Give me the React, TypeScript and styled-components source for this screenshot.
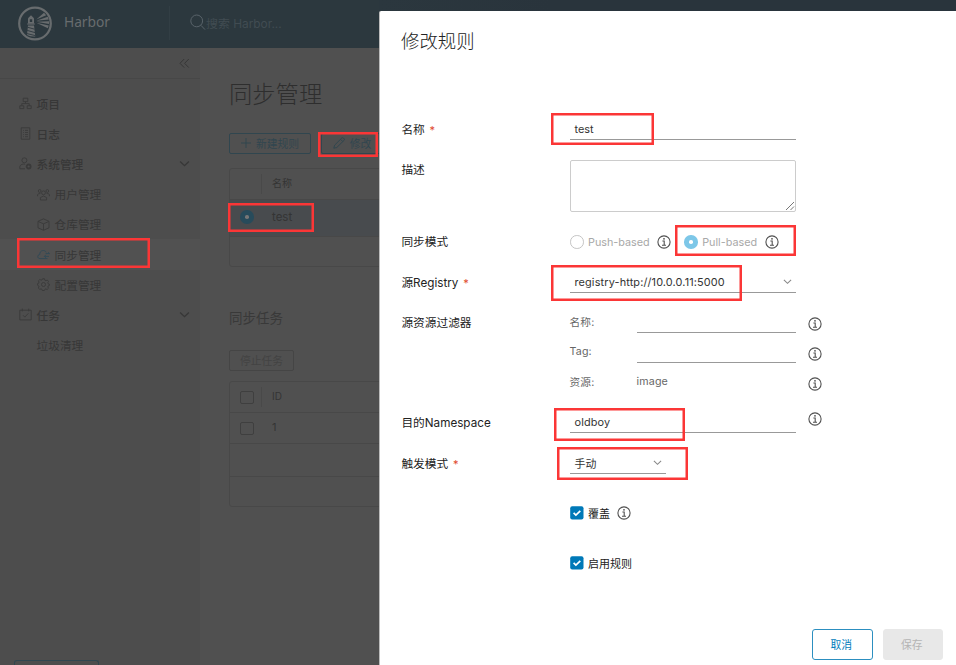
import React from "react";
import styled, { createGlobalStyle, css } from "styled-components";

const Global = createGlobalStyle`
  * { box-sizing: border-box; }
  html, body { margin: 0; padding: 0; overflow: hidden; background: #505050; }
  body { font-family: Inter, "Noto Sans CJK SC", sans-serif; font-size: 11.7px; }
`;

const Screen = styled.div`
  position: relative;
  width: 956px;
  height: 665px;
  overflow: hidden;
  background: #505050;
`;

/* ---------- application behind the dialog ---------- */
const Header = styled.header`
  display: flex;
  align-items: center;
  height: 48px;
  padding-left: 17px;
  padding-bottom: 2px;
  background: #2c383e;
  color: #686c6e;
`;
const Brand = styled.div`
  display: flex;
  align-items: center;
  gap: 12px;
  width: 153px;
  height: 34px;
  border-right: 1px solid #323e44;
  font-family: "Noto Sans", sans-serif;
  font-size: 13.8px;
`;
const BrandName = styled.span`
  padding-bottom: 3px;
  letter-spacing: -0.05px;
`;
const Search = styled.div`
  display: flex;
  align-items: center;
  gap: 0;
  margin-left: 20px;
  color: #414c52;
  font-size: 11.9px;
  span { padding-bottom: 1px; }
  svg { color: #59636a; margin-top: -2px; }
`;
const Body = styled.div`
  display: flex;
  height: 617px;
`;
const Sidebar = styled.nav`
  display: flex;
  flex-direction: column;
  width: 200px;
  background: #4d4d4d;
  color: #373737;
`;
const Collapse = styled.div`
  display: flex;
  justify-content: flex-end;
  align-items: center;
  height: 31px;
  padding-right: 10px;
  margin-bottom: 9.5px;
  border-bottom: 1px solid #474747;
  color: #363636;
`;
const NavItem = styled.div<{ $level?: number; $active?: boolean; $bold?: boolean }>`
  display: flex;
  align-items: center;
  gap: 5px;
  height: 30.2px;
  padding: 0 10px 0 ${(p) => (p.$level ? 36.5 : 18.5)}px;
  font-weight: ${(p) => (p.$bold ? 500 : 400)};
  ${(p) => p.$active && css`background: #515151;`}
  svg { flex: none; }
`;
const NavText = styled.span`
  flex: 1;
  padding-bottom: 1px;
`;
const SideFoot = styled.div`
  width: 85px;
  height: 5px;
  margin: auto 0 0 14px;
  border: 1px solid #304650;
  border-bottom: 0;
  border-radius: 3px 3px 0 0;
`;
const Content = styled.main`
  flex: 1;
  padding: 30px 0 0 29px;
`;
const PageTitle = styled.h1`
  margin: 0;
  height: 55px;
  color: #2e2e2e;
  font-size: 23.3px;
  font-weight: 300;
  line-height: 34px;
`;
const Actions = styled.div`
  display: flex;
  gap: 10px;
`;
const Outline = styled.div<{ $w: number; $off?: boolean }>`
  display: flex;
  align-items: center;
  justify-content: center;
  gap: 5px;
  width: ${(p) => p.$w}px;
  height: 21px;
  padding-bottom: 1px;
  border: 1px solid ${(p) => (p.$off ? "#454545" : "#30464f")};
  border-radius: 2px;
  color: ${(p) => (p.$off ? "#434343" : "#30464f")};
  font-size: 10.8px;
`;
const Table = styled.div<{ $mt: number }>`
  width: 700px;
  margin-top: ${(p) => p.$mt}px;
  border: 1px solid #484848;
  border-radius: 3px;
  color: #343434;
  font-size: 10px;
`;
const TableRow = styled.div<{ $h: number; $fill?: boolean; $foot?: boolean; $size?: number }>`
  display: flex;
  align-items: center;
  height: ${(p) => p.$h}px;
  border-bottom: ${(p) => (p.$foot ? 0 : 1)}px solid #484848;
  background: ${(p) => (p.$fill ? "#484b4e" : "transparent")};
  font-size: ${(p) => p.$size ?? 10}px;
`;
const Cell = styled.span`
  padding-bottom: 3px;
`;
const Pick = styled.div<{ $divider?: boolean }>`
  display: flex;
  align-items: center;
  width: 32px;
  height: 20px;
  padding-left: 10px;
  margin-right: 10px;
  border-right: 1px solid ${(p) => (p.$divider ? "#494949" : "transparent")};
`;
const EmptyBox = styled.span`
  width: 14px;
  height: 13px;
  border: 1px solid #3f3f3f;
  border-radius: 2px;
`;
const Section = styled.h2`
  margin: 42px 0 21px;
  height: 20px;
  color: #393939;
  font-size: 13.5px;
  font-weight: 400;
  line-height: 19px;
`;

/* ---------- dialog ---------- */
const HeaderShade = styled.div`
  position: absolute;
  left: 379px;
  top: 0;
  width: 577px;
  height: 20px;
  background: linear-gradient(90deg, #2b373e, #29343c 30%);
`;
const Dialog = styled.section`
  position: absolute;
  left: 379px;
  top: 11px;
  width: 577px;
  height: 654px;
  padding: 17px 13px 5px 22px;
  display: flex;
  flex-direction: column;
  border-left: 1px solid #bcbcbc;
  border-radius: 2px 0 0 0;
  background: #fff;
  color: #303030;
`;
const DialogTitle = styled.h2`
  margin: 0 0 0 -1px;
  height: 82px;
  color: #222;
  font-size: 18.4px;
  font-weight: 300;
  line-height: 26px;
`;
const FormRow = styled.div<{ $h: number }>`
  display: grid;
  grid-template-columns: 168px 1fr;
  height: ${(p) => p.$h}px;
`;
const Label = styled.label`
  height: 40px;
  margin-left: -0.6px;
  line-height: 40px;
  color: #222;
  font-size: 11.7px;
  white-space: nowrap;
`;
const Star = styled.span`
  margin-left: 1.5px;
  color: #e0482c;
  font-size: 11px;
`;
const Line = styled.div`
  display: flex;
  align-items: center;
  height: 40px;
`;
const Field = styled.div<{ $w?: number; $sp?: number }>`
  display: flex;
  align-items: center;
  justify-content: space-between;
  width: ${(p) => p.$w ?? 226}px;
  height: 20px;
  padding: 0 4px 1px 4.5px;
  border-bottom: 1px solid #999;
  color: #333;
  font-size: 10.9px;
  letter-spacing: ${(p) => p.$sp ?? 0}px;
  svg { color: #888; }
`;
const TextArea = styled.div`
  display: flex;
  align-items: flex-end;
  justify-content: flex-end;
  width: 226px;
  height: 52px;
  margin-top: 9.5px;
  border: 1px solid #ccc;
  border-radius: 2px;
  color: #777;
`;
const Muted = styled.span`
  margin: 0 7.5px 0 4.5px;
  color: #a8a8a8;
  font-size: 10.8px;
`;
const EmptyRadio = styled.span`
  width: 13.5px;
  height: 13.5px;
  border: 1px solid #c4c4c4;
  border-radius: 50%;
`;
const Radio = styled.span<{ $dim?: boolean }>`
  display: flex;
  align-items: center;
  justify-content: center;
  width: 13.5px;
  height: 13.5px;
  margin-bottom: ${(p) => (p.$dim ? 2 : 0)}px;
  border-radius: 50%;
  background: ${(p) => (p.$dim ? "#274b5b" : "#7dc7e8")};
  &::after {
    content: "";
    width: 3.5px;
    height: 3.5px;
    border-radius: 50%;
    background: ${(p) => (p.$dim ? "#777" : "#fff")};
  }
`;
const Spacer = styled.span<{ $w: number }>`
  width: ${(p) => p.$w}px;
`;
const Filters = styled.div`
  display: grid;
  grid-auto-rows: 30.2px;
  padding-top: 5px;
`;
const FilterRow = styled.div`
  display: grid;
  grid-template-columns: 67px 171px 14px;
  align-items: center;
  color: #666;
  font-size: 10.7px;
  svg { margin-top: 2px; }
`;
const FilterText = styled.span`
  margin-left: -0.5px;
  padding-bottom: 2px;
  letter-spacing: 0.15px;
`;
const FilterInput = styled.span`
  width: 159px;
  height: 20px;
  margin-top: 1px;
  border-bottom: 1px solid #999;
`;
const CheckLabel = styled.span`
  margin: 0 7px 0 4px;
  color: #222;
  font-size: 11px;
`;
const HintSlot = styled.span`
  padding-bottom: 8px;
`;
const Footer = styled.footer`
  display: flex;
  justify-content: flex-end;
  gap: 10px;
  margin-top: auto;
`;
const Button = styled.button<{ $off?: boolean }>`
  width: 60.5px;
  height: 31px;
  padding: 0 2px 1px 0;
  border: 1px solid ${(p) => (p.$off ? "#e8e8e8" : "#2c8fc0")};
  border-radius: 3px;
  background: ${(p) => (p.$off ? "#e8e8e8" : "#fff")};
  color: ${(p) => (p.$off ? "#b4b4b4" : "#007cbb")};
  font-family: inherit;
  font-size: 10.8px;
`;
/* Highlight frame drawn over the page */
const Mark = styled.div<{ $x: number; $y: number; $w: number; $h: number }>`
  position: absolute;
  left: ${(p) => p.$x}px;
  top: ${(p) => p.$y}px;
  width: ${(p) => p.$w}px;
  height: ${(p) => p.$h}px;
  border: 2px solid #fb3636;
  box-shadow: inset 0 0 0 0.5px #fb3636;
`;
const Icon = styled.svg`
  display: block;
  flex: none;
  fill: none;
  stroke: currentColor;
`;

const Logo = () => (
  <Icon width="35" height="35" viewBox="0 0 35 35">
    <circle cx="18" cy="17.5" r="15.8" strokeWidth="2.2" />
    <path d="M11 12.2 14 9.2 17 12.2V17.5H11Z" fill="currentColor" stroke="none" />
    <path d="M12.8 13.2h2.4v2.8h-2.4z" fill="#2c383e" stroke="none" />
    <path d="M10.3 18h7.4" strokeWidth="1.2" />
    <path d="M11 19.5h6L18.3 30.5Q14 31 10 29Z" fill="currentColor" stroke="none" />
    <path d="M10.5 21.2 17.5 23.2M10.2 24.4 18 26.6M10 27.6 18.3 29.6" stroke="#2c383e" strokeWidth=".9" />
    <path d="M19.3 13.6 27 6.8 29.2 9.2ZM19.3 14.8 30.8 10.8 31.8 13.6ZM19.3 15.8 32 15.2V18ZM19.3 16.8 31.8 19.6 30.8 22.3Z" fill="currentColor" stroke="none" />
  </Icon>
);
const Info = () => (
  <Icon width="14" height="14" viewBox="0 0 14 14" color="#505050">
    <circle cx="7" cy="7" r="6.1" strokeWidth="1.1" />
    <path d="M5.4 6H7.2V10.2M5 10.3H9" strokeWidth="1.1" />
    <circle cx="7" cy="3.8" r=".9" fill="currentColor" stroke="none" />
  </Icon>
);
const Chevron = ({ size = 10 }: { size?: number }) => (
  <Icon width={size} height={size} viewBox="0 0 10 10" strokeWidth="1.2">
    <path d="M1 3.1 5 7 9 3.1" />
  </Icon>
);
const Check = () => (
  <Icon width="14" height="14" viewBox="0 0 14 14">
    <rect x=".2" y=".2" width="13.3" height="13.3" rx="2" fill="#0079b8" stroke="none" />
    <path d="M3.6 6.8 5.9 9.1 10.3 4.8" stroke="#fff" strokeWidth="1.7" />
  </Icon>
);

const glyphs: Record<string, React.ReactNode> = {
  projects: <path d="M4.2 1.2h4.6v3.4H4.2zM.8 8.8h4v2.8h-4zM8.2 8.8h4v2.8h-4zM6.5 4.6v2M2.8 8.8V6.6h7.4v2.2" />,
  logs: <path d="M2.2.8h8.6v11.4H2.2zM4.2 3.4h.8M6 3.4h3M4.2 5.5h.8M6 5.5h3M4.2 7.6h.8M6 7.6h3M4.2 9.7h.8M6 9.7h3" />,
  admin: <><circle cx="5.4" cy="3.3" r="2.5" /><path d="M6 11.8H.8V9.5C1.4 7.4 4 6.7 6.2 7.2" /><circle cx="9.6" cy="9.5" r="2" strokeWidth="1.8" /></>,
  users: <><circle cx="6.5" cy="4.8" r="1.9" /><circle cx="2.7" cy="3" r="1.4" /><circle cx="10.3" cy="3" r="1.4" /><path d="M3.4 12V9.5Q6.5 6.6 9.6 9.5V12ZM.6 8.2V6.6Q1.5 5.4 3.4 5.5M12.4 8.2V6.6Q11.5 5.4 9.6 5.5" /></>,
  registry: <path d="M6.5.9 12 3.3V9.8L6.5 12.3 1 9.8V3.3ZM1.2 3.5 6.5 5.8 11.8 3.5M6.5 5.8V12" />,
  sync: <path d="M10.5 10.6H3C-.1 10.4.1 6.9 2.8 6.5 2.3 2.2 8 1.2 9.2 4.4M8.6 5.6h4M11.2 4.2l1.4 1.4M12 8.4H7.4l1.5-1.5M7.4 8.4l1.5 1.4" />,
  config: <><circle cx="6.5" cy="6.5" r="2" /><path d="M5.5.8h2l.4 1.5 1 .4 1.4-.7 1.2 1.5-.7 1.2.4 1.1 1.2.4v1.2l-1.3.6-.3.9.7 1.3-1.4 1.3-1.3-.6-.9.4-.6 1.2h-2L5 11.3 4 10.8l-1.3.6-1.3-1.4.6-1.3-.4-.9L.6 7.3V5.6l1.1-.4L2 4l-.6-1.2 1.4-1.3 1.4.7.8-.3Z" /></>,
  tasks: <path d="M.8 2.2h11.4v9.7H.8zM3.3.6v2.8M9.7.6v2.8M4 7.2l1.8 1.9 3.6-3.8" />,
};
const NavIcon = ({ name }: { name: string }) => (
  <Icon width="13" height="13" viewBox="0 0 13 13" strokeWidth=".9" color={name === "sync" ? "#304a57" : "#3a3a3a"}>
    {glyphs[name]}
  </Icon>
);

const nav = [
  { icon: "projects", text: "项目", bold: true },
  { icon: "logs", text: "日志", bold: true },
  { icon: "admin", text: "系统管理", bold: true, open: true },
  { icon: "users", text: "用户管理", level: 1 },
  { icon: "registry", text: "仓库管理", level: 1 },
  { icon: "sync", text: "同步管理", level: 1, active: true },
  { icon: "config", text: "配置管理", level: 1 },
  { icon: "tasks", text: "任务", bold: true, open: true },
  { text: "垃圾清理", level: 1 },
];

const marks = [
  [16.5, 238, 133, 29.5],
  [318, 131.5, 60, 25],
  [228, 203, 86, 29],
  [550.5, 113, 103, 32],
  [674.5, 225, 121.5, 30.5],
  [550.5, 265, 191, 35.5],
  [553.5, 407.5, 131, 33],
  [557, 447, 130.5, 32.5],
];

export default function App() {
  return (
    <Screen>
      <Global />
      <Header>
        <Brand><Logo /><BrandName>Harbor</BrandName></Brand>
        <Search>
          <Icon width="16" height="17" viewBox="0 0 16 17"><circle cx="6.7" cy="6.9" r="5.9" /><path d="m11 11.4 4 4.2" /></Icon>
          <span>搜索 Harbor...</span>
        </Search>
      </Header>
      <Body>
        <Sidebar>
          <Collapse>
            <Icon width="11" height="11" viewBox="0 0 11 11"><path d="M5.2 1 1 5.3 5.2 9.6M9.8 1 5.6 5.3 9.8 9.6" /></Icon>
          </Collapse>
          {nav.map((n) => (
            <NavItem key={n.text} $level={n.level} $active={n.active} $bold={n.bold}>
              {n.icon && <NavIcon name={n.icon} />}
              <NavText>{n.text}</NavText>
              {n.open && <Chevron size={11} />}
            </NavItem>
          ))}
          <SideFoot />
        </Sidebar>
        <Content>
          <PageTitle>同步管理</PageTitle>
          <Actions>
            <Outline $w={82}>
              <Icon width="10" height="10" viewBox="0 0 10 10"><path d="M5 0v10M0 5h10" /></Icon>新建规则
            </Outline>
            <Outline $w={62}>
              <Icon width="12" height="12" viewBox="0 0 12 12"><path d="m.8 11.2.8-3L8.8 1Q9.5.3 10.3 1l.8.8q.7.8 0 1.5L3.8 10.5ZM7.5 2.3 9.8 4.6" /></Icon>修改
            </Outline>
          </Actions>
          <Table $mt={14}>
            <TableRow $h={31}><Pick $divider /><Cell>名称</Cell></TableRow>
            <TableRow $h={37} $fill $size={11.5}><Pick><Radio $dim /></Pick><Cell>test</Cell></TableRow>
            <TableRow $h={29} $foot />
          </Table>
          <Section>同步任务</Section>
          <Outline $w={65} $off>停止任务</Outline>
          <Table $mt={10}>
            <TableRow $h={31}><Pick $divider><EmptyBox /></Pick><Cell>ID</Cell></TableRow>
            <TableRow $h={31} $size={11}><Pick><EmptyBox /></Pick><Cell>1</Cell></TableRow>
            <TableRow $h={33} />
            <TableRow $h={29} $foot />
          </Table>
        </Content>
      </Body>
      <HeaderShade />
      <Dialog>
        <DialogTitle>修改规则</DialogTitle>
        <FormRow $h={40}>
          <Label>名称 <Star>*</Star></Label>
          <Line><Field>test</Field></Line>
        </FormRow>
        <FormRow $h={72}>
          <Label>描述</Label>
          <TextArea><Icon width="10" height="10" viewBox="0 0 10 10"><path d="M1 9 9 1M5.5 9 9 5.5" /></Icon></TextArea>
        </FormRow>
        <FormRow $h={40.5}>
          <Label>同步模式</Label>
          <Line>
            <EmptyRadio /><Muted>Push-based</Muted><Info />
            <Spacer $w={13} />
            <Radio /><Muted>Pull-based</Muted><Info />
          </Line>
        </FormRow>
        <FormRow $h={40}>
          <Label>源Registry <Star>*</Star></Label>
          <Line><Field $sp={0.14}>registry-http://10.0.0.11:5000<Chevron size={9} /></Field></Line>
        </FormRow>
        <FormRow $h={100.5}>
          <Label>源资源过滤器</Label>
          <Filters>
            <FilterRow><FilterText>名称:</FilterText><FilterInput /><Info /></FilterRow>
            <FilterRow><FilterText>Tag:</FilterText><FilterInput /><Info /></FilterRow>
            <FilterRow><FilterText>资源:</FilterText><FilterText>image</FilterText><Info /></FilterRow>
          </Filters>
        </FormRow>
        <FormRow $h={40.5}>
          <Label>目的Namespace</Label>
          <Line><Field $sp={0.15}>oldboy</Field><Spacer $w={12} /><HintSlot><Info /></HintSlot></Line>
        </FormRow>
        <FormRow $h={49}>
          <Label>触发模式 <Star>*</Star></Label>
          <Line><Field $w={96}>手动<Chevron size={9} /></Field></Line>
        </FormRow>
        <FormRow $h={50.5}>
          <span />
          <Line><Check /><CheckLabel>覆盖</CheckLabel><Info /></Line>
        </FormRow>
        <FormRow $h={40}>
          <span />
          <Line><Check /><CheckLabel>启用规则</CheckLabel></Line>
        </FormRow>
        <Footer>
          <Button>取消</Button>
          <Button $off>保存</Button>
        </Footer>
      </Dialog>
      {marks.map(([x, y, w, h]) => <Mark key={`${x}-${y}`} $x={x} $y={y} $w={w} $h={h} />)}
    </Screen>
  );
}
